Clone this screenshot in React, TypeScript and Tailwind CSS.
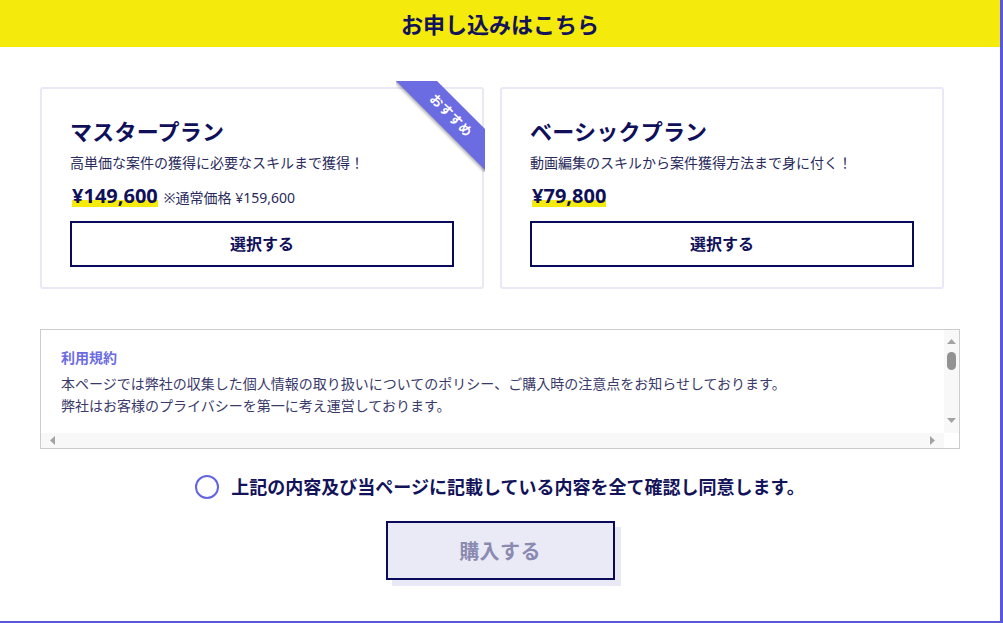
import React from "react";

const FONT = { fontFamily: '"Noto Sans", "Noto Sans CJK JP", sans-serif' };

function PlanCard({
  title,
  desc,
  price,
  note,
  ribbon,
}: {
  title: string;
  desc: string;
  price: string;
  note?: string;
  ribbon?: boolean;
}) {
  return (
    <div className="relative w-[444px] h-[202px] border-2 border-[#e8e8f7] rounded-[3px] bg-white pt-[27px] px-[28px] flex flex-col">
      {ribbon && (
        <div className="absolute top-[-8px] right-[-3px] w-[89px] h-[91px] overflow-hidden">
          <div className="absolute left-[-15px] top-[20px] w-[140px] h-[29px] rotate-45 bg-[#6b6be2] text-white text-[13px] font-bold tracking-[0.04em] flex items-center justify-center shadow-[0_2px_3px_rgba(0,0,0,0.3)]">
            おすすめ
          </div>
        </div>
      )}
      <div className="text-[22px] leading-[30px] font-bold text-[#10105a] tracking-[0.01em]">{title}</div>
      <div className="mt-[7px] text-[14px] leading-[20px] text-[#2a2a5c]">{desc}</div>
      <div className="mt-[9px] h-[28px] flex items-baseline pl-[2px]">
        <span className="inline-block h-[28px] leading-[28px] text-[20px] font-bold text-[#10105a] bg-[linear-gradient(transparent_64%,#f4ea0b_64%,#f4ea0b_88%,transparent_88%)]">
          {price}
        </span>
        {note && <span className="ml-[6px] text-[14px] text-[#2a2a5c]">{note}</span>}
      </div>
      <button className="mt-[11px] w-[384px] h-[46px] border-2 border-[#0a0a5a] bg-white text-[16px] font-bold text-[#10105a] flex items-center justify-center">
        選択する
      </button>
    </div>
  );
}

function Tri({ dir }: { dir: "up" | "down" | "left" | "right" }) {
  const v = dir === "up" || dir === "down";
  const pts =
    dir === "up"
      ? "0,5 4.5,0 9,5"
      : dir === "down"
      ? "0,0 9,0 4.5,5"
      : dir === "left"
      ? "5,0 5,9 0,4.5"
      : "0,0 0,9 5,4.5";
  return (
    <svg width={v ? 9 : 5} height={v ? 5 : 9} viewBox={v ? "0 0 9 5" : "0 0 5 9"} className="block shrink-0">
      <polygon points={pts} fill="#a3a3a3" />
    </svg>
  );
}

export default function App() {
  return (
    <div
      style={FONT}
      className="w-[1003px] h-[623px] bg-white border-r-[3px] border-b-2 border-[#5858de] flex flex-col overflow-hidden"
    >
      <div className="h-[47px] shrink-0 bg-[#f4ea0b] flex items-center justify-center">
        <h1 className="text-[22px] font-bold text-[#13135a] leading-none">お申し込みはこちら</h1>
      </div>

      <div className="px-[40px] pt-[40px] flex flex-col">
        <div className="flex gap-4">
          <PlanCard
            title="マスタープラン"
            desc="高単価な案件の獲得に必要なスキルまで獲得！"
            price="¥149,600"
            note="※通常価格 ¥159,600"
            ribbon
          />
          <PlanCard
            title="ベーシックプラン"
            desc="動画編集のスキルから案件獲得方法まで身に付く！"
            price="¥79,800"
          />
        </div>

        <div className="mt-[40px] w-[920px] h-[120px] border border-[#cccccc] bg-white flex flex-col">
          <div className="flex h-[103px]">
            <div className="flex-1 overflow-hidden pt-[18px] px-[20px]">
              <div className="text-[14px] leading-[20px] font-bold text-[#6b6be2] mb-[5px]">利用規約</div>
              <p className="text-[14px] leading-[22px] text-[#3a3a6a] whitespace-nowrap">
                本ページでは弊社の収集した個人情報の取り扱いについてのポリシー、ご購入時の注意点をお知らせしております。
              </p>
              <p className="text-[14px] leading-[22px] text-[#3a3a6a] whitespace-nowrap">
                弊社はお客様のプライバシーを第一に考え運営しております。
              </p>
            </div>
            <div className="w-[15px] bg-[#f8f8f8] flex flex-col items-center">
              <div className="mt-[9px]">
                <Tri dir="up" />
              </div>
              <div className="mt-[8px] w-[9px] h-[18px] rounded-full bg-[#929292]" />
              <div className="flex-1" />
              <div className="mb-[10px]">
                <Tri dir="down" />
              </div>
            </div>
          </div>
          <div className="flex h-[15px]">
            <div className="flex-1 bg-[#f8f8f8] flex items-center justify-between px-[9px]">
              <Tri dir="left" />
              <Tri dir="right" />
            </div>
            <div className="w-[15px] bg-white" />
          </div>
        </div>

        <label className="mt-[26px] flex items-center justify-center gap-3 h-[24px]">
          <span className="w-6 h-6 rounded-full border-2 border-[#6464e0] bg-white shrink-0" />
          <span className="text-[18px] font-bold text-[#13135a] leading-[24px]">
            上記の内容及び当ページに記載している内容を全て確認し同意します。
          </span>
        </label>

        <div className="mt-[22px] flex justify-center">
          <button className="w-[229px] h-[59px] pt-[3px] border-2 border-[#0a0a5a] bg-[#eaeaf6] text-[20px] font-bold text-[#8a8ab2] tracking-[0.02em] shadow-[6px_6px_0_#e8e8f6] flex items-center justify-center">
            購入する
          </button>
        </div>
      </div>
    </div>
  );
}
